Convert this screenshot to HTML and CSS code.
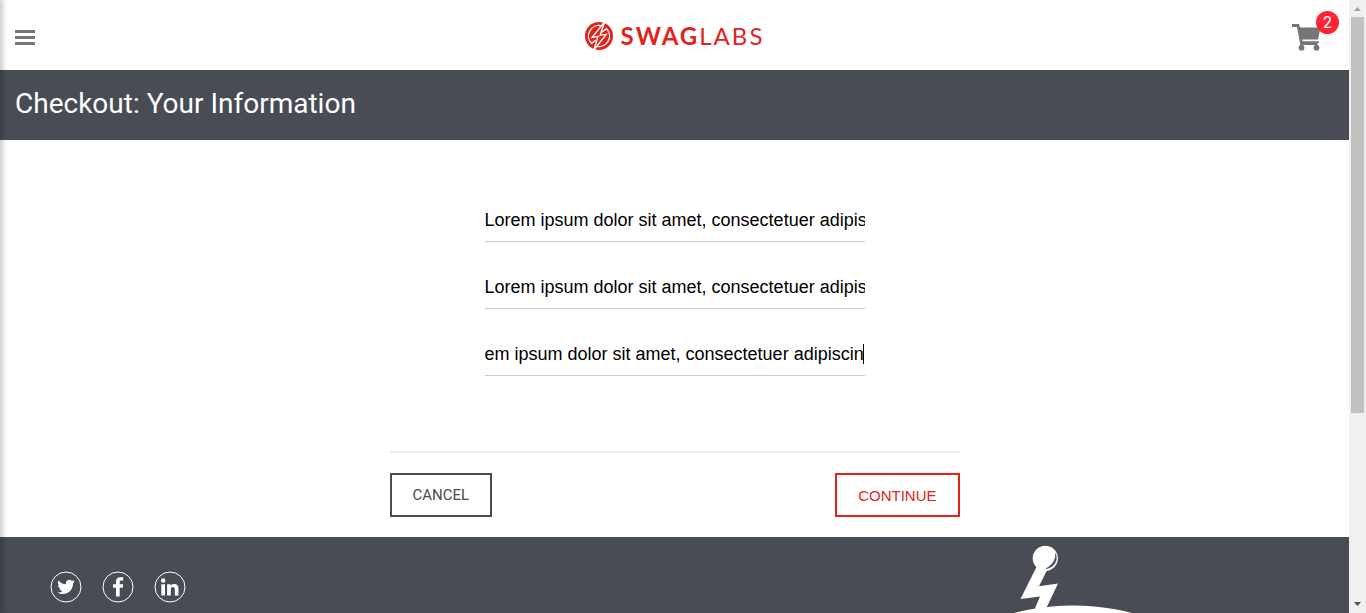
FILE: index.html
```html
<!DOCTYPE html>
<html lang="en">
<head>
<meta charset="utf-8">
<meta name="viewport" content="width=device-width, initial-scale=1">
<title>Swag Labs</title>
<link rel="stylesheet" href="styles.css">
</head>
<body>
<div class="page">
  <header class="header">
    <button class="icon-button menu-button" type="button" aria-label="Open menu">
      <svg width="20" height="15" viewBox="0 0 20 15" fill="#757575"><path d="M0 0h20v3H0zM0 6h20v3H0zM0 12h20v3H0z"/></svg>
    </button>
    <div class="logo">
      <svg width="28" height="28" viewBox="0 0 28 28" aria-hidden="true">
        <circle cx="14" cy="14" r="14" fill="#e2231a"/>
        <g fill="none" stroke="#fff" stroke-width="1.4">
          <path d="M15.800 3.600A10.500 10.500 0 0 0 6.500 21.300L11 18"/>
          <path d="M12.200 24.400A10.500 10.500 0 0 0 21.500 6.700L17 10"/>
          <path d="M19.500 0 7.200 15.300 13 14.600 8.800 28 21.200 12.400 15.200 13.200z" fill="#e2231a"/>
        </g>
      </svg>
      <span class="logo-text"><b>SWAG</b><span>LABS</span></span>
    </div>
    <a class="cart" href="#cart" aria-label="Cart, 2 items">
      <svg width="30" height="27" viewBox="0 0 30 27" fill="#757575" aria-hidden="true">
        <path d="M0 0h7l1 3.500h20.500L26 15.500H10.200l.5 1.800H27V19h-1.500v2h-15l-2 .5L5 3H0zM9 20h2v2H9z"/>
        <circle cx="9.500" cy="23.700" r="2.900"/><circle cx="24.500" cy="23.700" r="2.900"/>
      </svg>
      <span class="badge">2</span>
    </a>
  </header>
  <div class="title-bar"><h1>Checkout: Your Information</h1></div>
  <main class="main">
    <form class="form">
      <div class="fields">
        <input class="field" type="text" aria-label="First Name" value="Lorem ipsum dolor sit amet, consectetuer adipis">
        <input class="field" type="text" aria-label="Last Name" value="Lorem ipsum dolor sit amet, consectetuer adipis">
        <div class="active-field">
          <input class="field" type="text" aria-label="Zip/Postal Code" value="em ipsum dolor sit amet, consectetuer adipiscin">
          <span class="caret"></span>
        </div>
      </div>
      <div class="actions">
        <button class="btn cancel" type="button">CANCEL</button>
        <button class="btn continue" type="button">CONTINUE</button>
      </div>
    </form>
  </main>
  <footer class="footer">
    <nav class="social" aria-label="Social">
      <a href="#twitter" aria-label="Twitter"><svg width="32" height="32" viewBox="0 0 32 32"><circle cx="16" cy="16" r="15" fill="none" stroke="#fff"/><path fill="#fff" transform="translate(7.300 7.200) scale(.73)" d="M23.950 4.570a10 10 0 0 1-2.820.770 4.960 4.960 0 0 0 2.160-2.720 9.900 9.900 0 0 1-3.130 1.180 4.920 4.920 0 0 0-8.380 4.480A14 14 0 0 1 1.640 3.160a4.920 4.920 0 0 0 1.520 6.570 4.900 4.900 0 0 1-2.230-.61v.06a4.920 4.920 0 0 0 3.950 4.830 5 5 0 0 1-2.210.08 4.940 4.940 0 0 0 4.600 3.420A9.870 9.870 0 0 1 0 19.540a14 14 0 0 0 7.550 2.210c9.050 0 14-7.500 14-13.980l-.02-.64a10 10 0 0 0 2.420-2.560z"/></svg></a>
      <a href="#facebook" aria-label="Facebook"><svg width="32" height="32" viewBox="0 0 32 32"><circle cx="16" cy="16" r="15" fill="none" stroke="#fff"/><path fill="#fff" d="M14 25.500v-8.800h-3v-3.500h3v-2.700c0-3 1.800-4.300 4.300-4.300h2.900v3.300h-1.900c-1.200 0-1.600.6-1.600 1.500v2.200h3.500l-.5 3.500h-3v8.800z"/></svg></a>
      <a href="#linkedin" aria-label="LinkedIn"><svg width="32" height="32" viewBox="0 0 32 32"><circle cx="16" cy="16" r="15" fill="none" stroke="#fff"/><path fill="#fff" d="M7.300 13.300H11V24.500H7.300zM13.100 13.300h3.500v1.500c.7-1.200 1.900-1.800 3.500-1.800 3.500 0 4.400 2.100 4.400 5.300v6.200h-3.700v-5.700c0-1.500-.3-2.700-1.900-2.700s-2.100 1.200-2.100 2.700v5.700h-3.700z"/><circle cx="9.200" cy="9.500" r="2.200" fill="#fff"/></svg></a>
    </nav>
    <svg class="robot" width="160" height="76" viewBox="989 537 160 76" aria-hidden="true">
      <g fill="#fff"><circle cx="1045.300" cy="558.300" r="12.600"/>
      <path d="M1037 566 1020.500 599 1040 596.500 1033 613h11l14-29.500-19 2.700 8.500-17z"/>
      <ellipse cx="1073" cy="653.500" rx="110" ry="48"/></g>
      <path d="M1055.500 553.500c.5 6-3 11.500-9.500 15.200 7.500-1 12.500-7.500 9.500-15.200z" fill="#474c55" stroke="#474c55" stroke-width=".5"/>
    </svg>
  </footer>
  <div class="menu-shadow"></div>
</div>
<div class="scrollbar" aria-hidden="true">
  <svg width="17" height="17" viewBox="0 0 17 17"><path d="M5 11h7L8.500 7z" fill="#a3a3a3"/></svg>
  <div class="track"><div class="thumb"></div></div>
  <svg width="17" height="17" viewBox="0 0 17 17"><path d="M5 6h7l-3.500 4z" fill="#505050"/></svg>
</div>
</body>
</html>
```
FILE: styles.css
```css
* { box-sizing: border-box; }
body {
  margin: 0;
  height: 100vh;
  display: flex;
  overflow: hidden;
  background: #fff;
  font-family: Roboto, "Liberation Sans", sans-serif;
}
svg { display: block; }
.page {
  flex: 1;
  min-width: 0;
  position: relative;
  display: flex;
  flex-direction: column;
  overflow: hidden;
}
.header {
  flex: none;
  height: 70px;
  padding: 0 15px;
  display: grid;
  grid-template-columns: 1fr auto 1fr;
  align-items: center;
}
.icon-button { border: 0; padding: 0; background: none; }
.menu-button { justify-self: start; padding-top: 5px; }
.logo { display: flex; align-items: center; gap: 8px; padding-top: 1px; }
.logo-text {
  font-family: Lato, sans-serif;
  font-size: 24px;
  line-height: 28px;
  letter-spacing: 2px;
  color: #e2231a;
}
.logo-text b { font-weight: 700; }
.logo-text span { font-weight: 400; }
.cart {
  justify-self: end;
  position: relative;
  margin: 5px 12px 0 0;
}
.badge {
  position: absolute;
  top: -13px;
  right: -17px;
  width: 23px;
  height: 23px;
  border-radius: 50%;
  background: #ff2337;
  color: #fff;
  font-size: 16px;
  line-height: 23px;
  text-align: center;
}
.title-bar {
  flex: none;
  height: 70px;
  padding: 16px 15px;
  background: #474c55;
  color: #fff;
}
h1 { margin: 0; font-size: 28px; line-height: 35px; font-weight: 400; }
.main { flex: none; padding: 58px 20px 20px; }
.form { max-width: 570px; margin: 0 auto; }
.fields {
  max-width: 380px;
  margin: 0 auto 75px;
  display: flex;
  flex-direction: column;
  gap: 23px;
}
.field {
  display: block;
  width: 100%;
  height: 44px;
  padding: 2px 0 0;
  border: 0;
  border-bottom: 1px solid #ccc;
  border-radius: 0;
  outline: 0;
  background: transparent;
  color: #000;
  font-family: "Liberation Sans", Arial, sans-serif;
  font-size: 18px;
}
.active-field { position: relative; }
.caret {
  position: absolute;
  top: 12px;
  right: 1px;
  width: 1px;
  height: 20px;
  background: #000;
}
.actions {
  border-top: 2px solid #ededed;
  padding-top: 20px;
  display: flex;
  justify-content: space-between;
}
.btn {
  height: 44px;
  padding: 0 21px;
  border: 2px solid;
  background: #fff;
  font-size: 15px;
}
.cancel { color: #474c55; font-family: Roboto, sans-serif; }
.continue { color: #e2231a; font-family: "Liberation Sans", Arial, sans-serif; }
.footer {
  flex: 1 0 auto;
  display: flex;
  justify-content: space-between;
  align-items: flex-start;
  padding: 0 200px 0 50px;
  background: #474c55;
}
.social { display: flex; gap: 20px; padding-top: 34px; }
.menu-shadow {
  position: absolute;
  top: 0;
  bottom: 0;
  left: -10px;
  width: 10px;
  box-shadow: 0 0 6px 2px rgba(0, 0, 0, .25);
}
.scrollbar {
  width: 17px;
  flex: none;
  display: flex;
  flex-direction: column;
  background: #f0f0f0;
}
.track { flex: 1; padding: 0 2px; }
.thumb { height: 68.4%; background: #c1c1c1; }
```
